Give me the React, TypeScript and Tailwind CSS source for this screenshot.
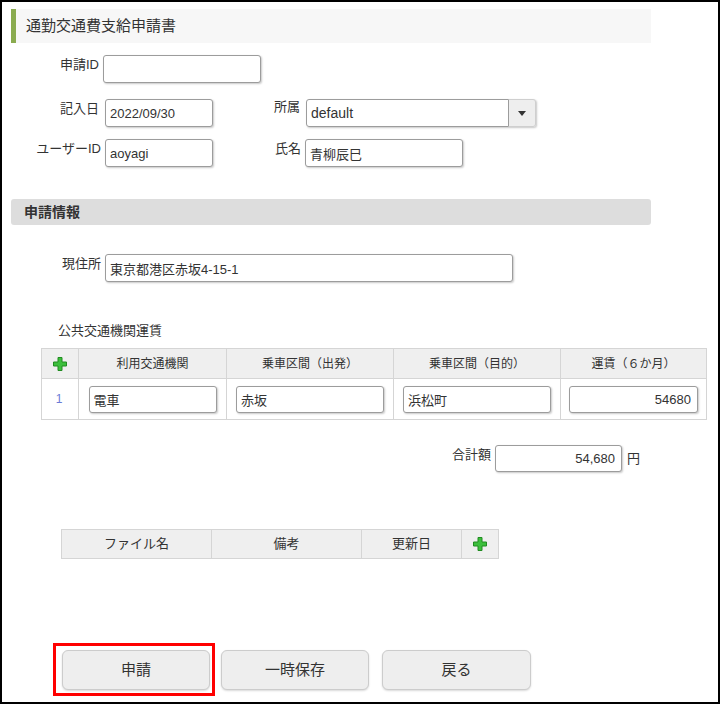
import React from "react";

const inputCls =
    "h-[28px] border border-[#9c9c9c] rounded-[3px] bg-white px-[4px] text-[13px] text-[#333] shadow-[1px_1px_2px_rgba(0,0,0,0.22)] outline-none";

function Plus() {
    return (
        <svg width="14" height="14" viewBox="0 0 14 14">
            <path
                d="M5 0.5h4v4.5h4.5v4h-4.5v4.5h-4v-4.5h-4.5v-4h4.5z"
                fill="#3cbf3c"
                stroke="#218c21"
                strokeWidth="1"
            />
        </svg>
    );
}

function Field({ value, w, right }: { value: string; w: string; right?: boolean }) {
    return (
        <input
            readOnly
            value={value}
            className={`${inputCls} ${w} ${right ? "text-right pr-[6px]" : ""}`}
        />
    );
}

export default function App() {
    const cols = ["利用交通機関", "乗車区間（出発）", "乗車区間（目的）", "運賃（６か月）"];

    return (
        <div className="w-[720px] h-[704px] border-2 border-black bg-white overflow-hidden text-[#333] font-['Liberation_Sans','Noto_Sans_CJK_JP',sans-serif]">
            {/* ===== TITLE ===== */}
            <div className="mt-[7px] ml-[9px] w-[640px] h-[34px] bg-[#f7f7f7] border-l-[5px] border-[#8aab4f] flex items-center pl-[10px] text-[15px]">
                通勤交通費支給申請書
            </div>

            {/* ===== HEADER FIELDS ===== */}
            <div className="mt-[12px] flex items-start">
                <span className="w-[97px] text-right text-[13px] leading-[16px] pt-[2px]">申請ID</span>
                <Field value="" w="w-[158px] ml-[4px]" />
            </div>

            <div className="mt-[16px] flex items-start">
                <span className="w-[97px] text-right text-[13px] leading-[16px] pt-[2px]">記入日</span>
                <Field value="2022/09/30" w="w-[108px] ml-[6px]" />
                <span className="ml-[61px] w-[32px] text-[13px] leading-[16px]">所属</span>
                <div className="flex h-[28px] w-[230px] rounded-[3px] shadow-[1px_1px_2px_rgba(0,0,0,0.22)]">
                    <div className="flex-1 flex items-center border border-[#9c9c9c] rounded-l-[3px] px-[4px] text-[14px] text-[#333]">
                        default
                    </div>
                    <div className="w-[27px] flex items-center justify-center bg-[#eeeeee] border border-l-0 border-[#cfcfcf] rounded-r-[3px]">
                        <svg width="8" height="5" viewBox="0 0 8 5">
                            <path d="M0 0h8L4 5z" fill="#333" />
                        </svg>
                    </div>
                </div>
            </div>

            <div className="mt-[12px] flex items-start">
                <span className="w-[99px] text-right text-[13px] leading-[16px] pt-[2px]">ユーザーID</span>
                <Field value="aoyagi" w="w-[108px] ml-[4px]" />
                <span className="ml-[62px] w-[30px] text-[13px] leading-[16px] pt-[2px]">氏名</span>
                <Field value="青柳辰巳" w="w-[158px]" />
            </div>

            {/* ===== SECTION: 申請情報 ===== */}
            <div className="mt-[32px] ml-[9px] w-[640px] h-[26px] bg-[#dddddd] rounded-[3px] flex items-center pl-[13px] text-[14px] font-bold">
                申請情報
            </div>

            <div className="mt-[29px] flex items-start">
                <span className="w-[99px] text-right text-[13px] leading-[16px] pt-[2px]">現住所</span>
                <Field value="東京都港区赤坂4-15-1" w="w-[408px] ml-[4px]" />
            </div>

            <div className="mt-[40px] ml-[56px] text-[13px] leading-[18px]">公共交通機関運賃</div>

            {/* fare table */}
            <div className="mt-[8px] ml-[39px] w-[666px] border-l border-t border-[#d5d5d5] grid grid-cols-[37px_148px_167px_167px_146px]">
                <div className="h-[30px] bg-[#efefef] border-r border-b border-[#d5d5d5] flex items-center justify-center">
                    <Plus />
                </div>
                {cols.map((c) => (
                    <div
                        key={c}
                        className="h-[30px] bg-[#efefef] border-r border-b border-[#d5d5d5] flex items-center justify-center text-[12px]"
                    >
                        {c}
                    </div>
                ))}
                <div className="h-[41px] border-r border-b border-[#d5d5d5] flex items-center justify-center pr-[2px] text-[12px] text-[#6b7bd6]">
                    1
                </div>
                <div className="h-[41px] border-r border-b border-[#d5d5d5] flex items-center justify-center">
                    <Field value="電車" w="w-[128px] !h-[27px]" />
                </div>
                <div className="h-[41px] border-r border-b border-[#d5d5d5] flex items-center justify-center">
                    <Field value="赤坂" w="w-[148px] !h-[27px]" />
                </div>
                <div className="h-[41px] border-r border-b border-[#d5d5d5] flex items-center justify-center">
                    <Field value="浜松町" w="w-[148px] !h-[27px]" />
                </div>
                <div className="h-[41px] border-r border-b border-[#d5d5d5] flex items-center justify-center">
                    <Field value="54680" w="w-[129px] !h-[27px]" right />
                </div>
            </div>

            {/* total */}
            <div className="mt-[25px] ml-[450px] flex items-start">
                <span className="text-[13px] leading-[16px] pt-[2px]">合計額</span>
                <Field value="54,680" w="w-[127px] !h-[27px] ml-[4px]" right />
                <span className="ml-[5px] text-[13px] leading-[16px] pt-[6px]">円</span>
            </div>

            {/* attachment table */}
            <div className="mt-[57px] ml-[59px] w-[438px] border-l border-t border-[#d5d5d5] grid grid-cols-[150px_150px_100px_37px] bg-[#efefef] text-[13px]">
                <div className="h-[29px] border-r border-b border-[#d5d5d5] flex items-center justify-center">ファイル名</div>
                <div className="h-[29px] border-r border-b border-[#d5d5d5] flex items-center justify-center">備考</div>
                <div className="h-[29px] border-r border-b border-[#d5d5d5] flex items-center justify-center">更新日</div>
                <div className="h-[29px] border-r border-b border-[#d5d5d5] flex items-center justify-center">
                    <Plus />
                </div>
            </div>

            {/* ===== BUTTONS ===== */}
            <div className="mt-[84px] ml-[51px] flex items-start">
                <div className="border-[3px] border-[#ff0000] pt-[4px] pl-[6px] pr-[2px] pb-[3px]">
                    <button className="w-[148px] h-[40px] rounded-[6px] border border-[#cccccc] bg-[#eeeeee] shadow-[0_1px_2px_rgba(0,0,0,0.15)] text-[15px] text-[#333]">
                        申請
                    </button>
                </div>
                <button className="mt-[7px] ml-[6px] w-[148px] h-[40px] rounded-[6px] border border-[#cccccc] bg-[#eeeeee] shadow-[0_1px_2px_rgba(0,0,0,0.15)] text-[15px] text-[#333]">
                    一時保存
                </button>
                <button className="mt-[7px] ml-[13px] w-[149px] h-[40px] rounded-[6px] border border-[#cccccc] bg-[#eeeeee] shadow-[0_1px_2px_rgba(0,0,0,0.15)] text-[15px] text-[#333]">
                    戻る
                </button>
            </div>
        </div>
    );
}
